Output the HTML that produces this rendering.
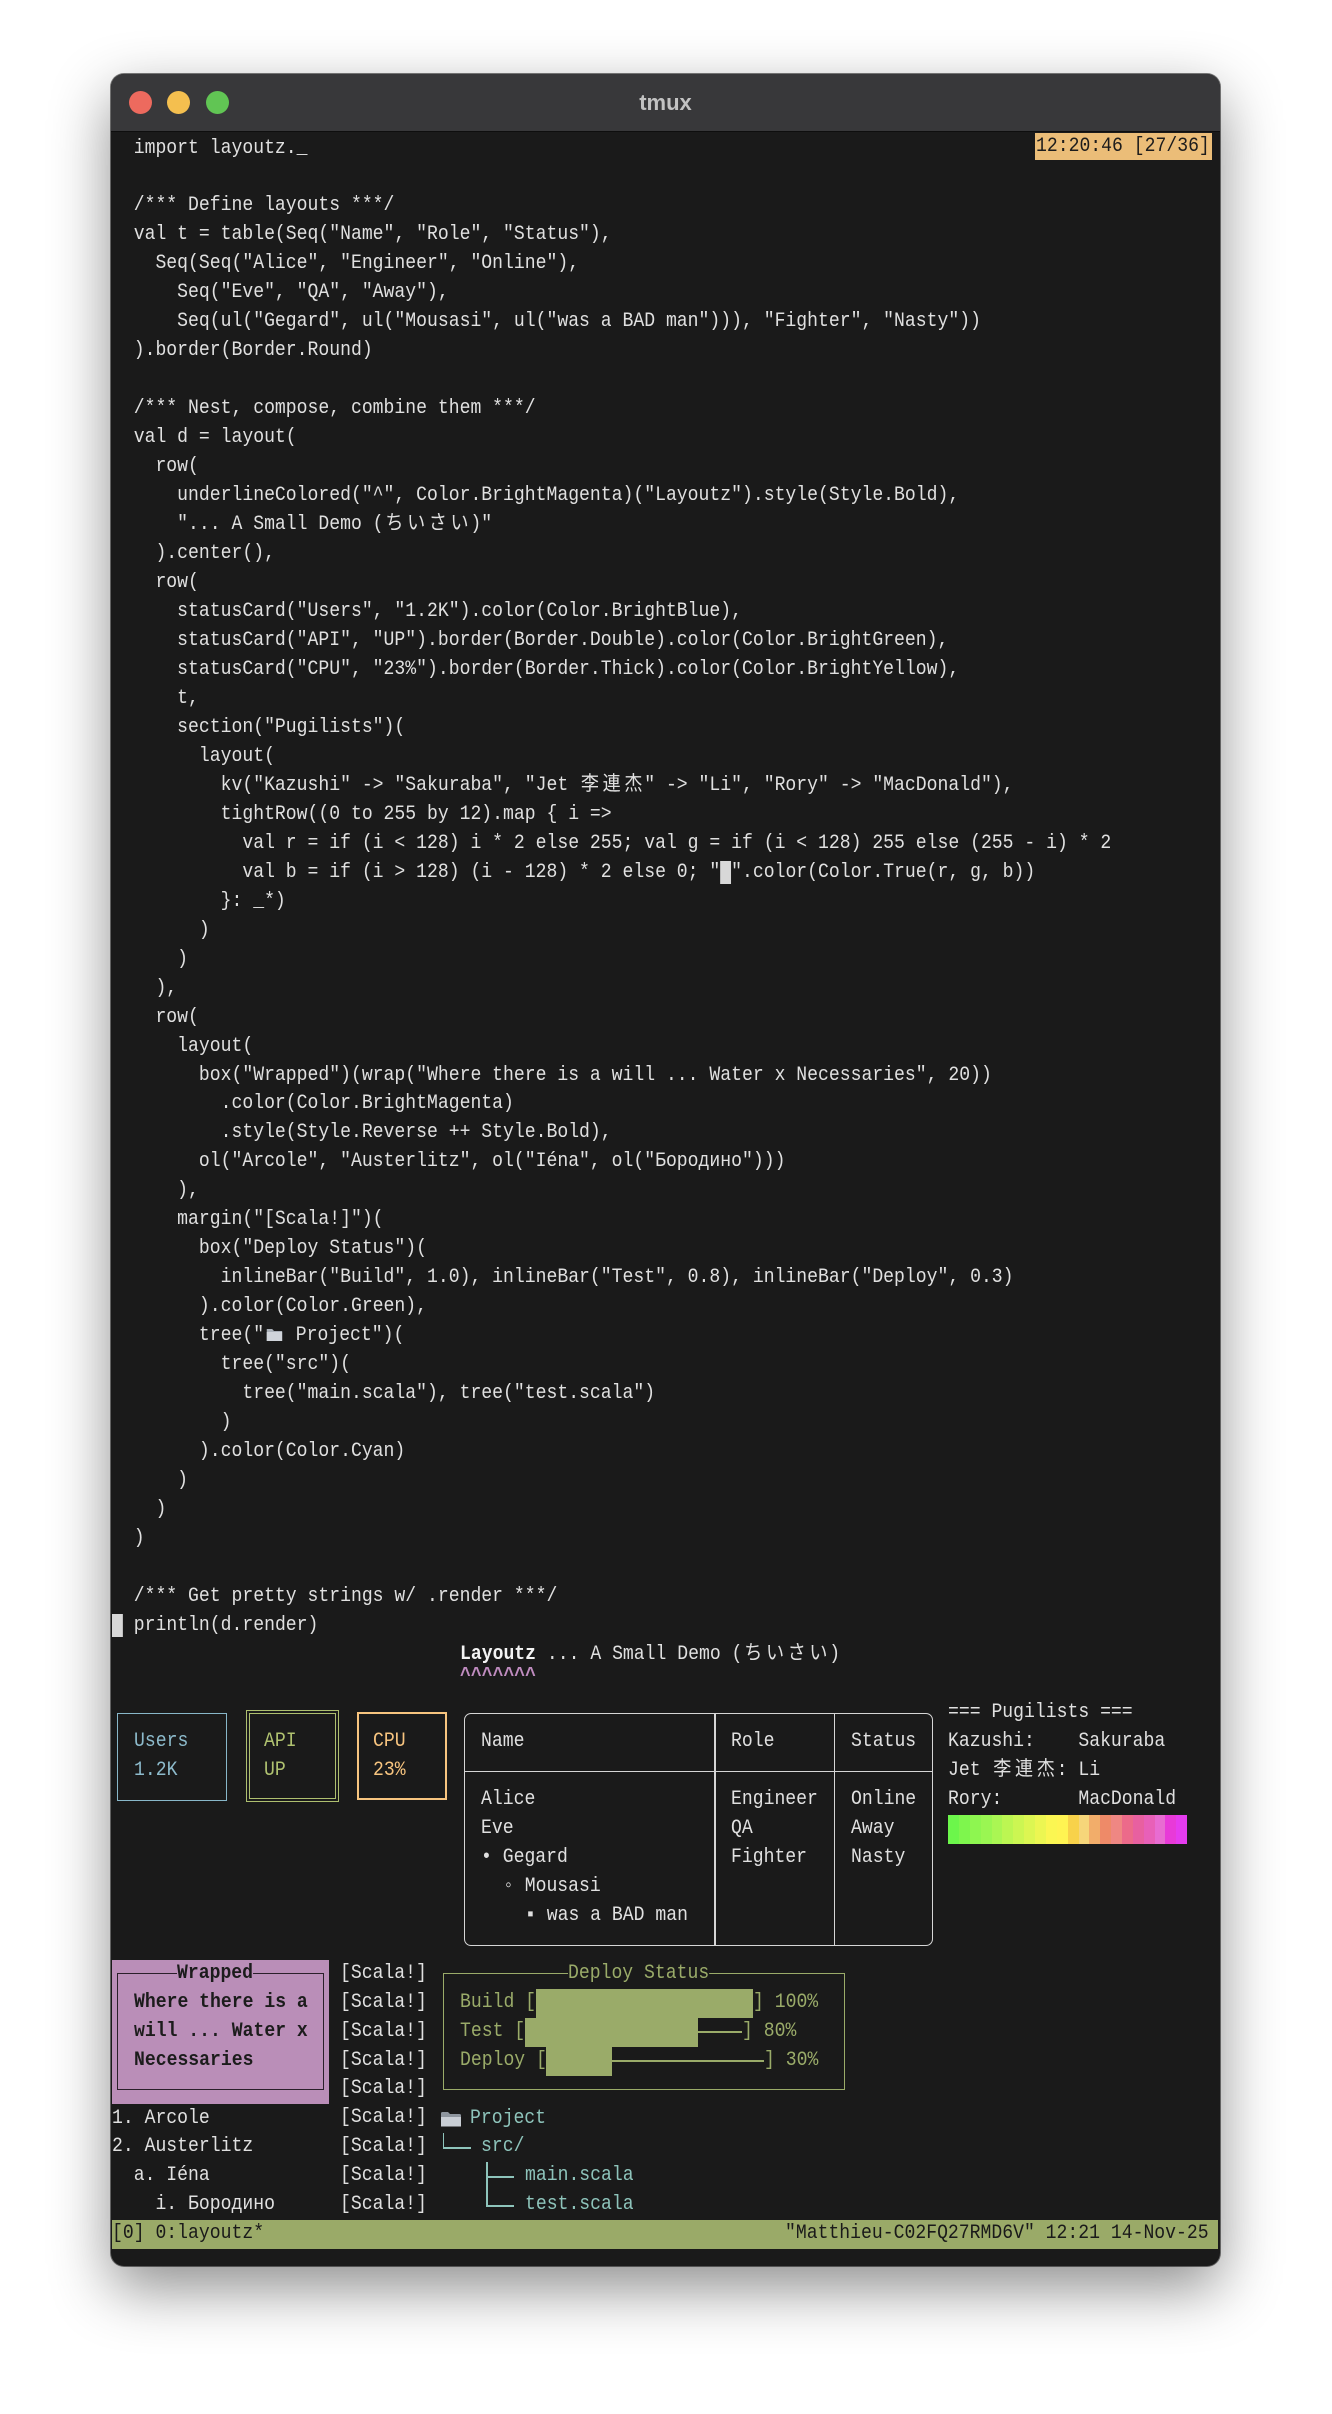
<!DOCTYPE html>
<html><head><meta charset="utf-8">
<style>
html,body{margin:0;padding:0}
body{width:1332px;height:2414px;background:#ffffff;position:relative;overflow:hidden;font-family:"Liberation Mono","Noto Sans CJK JP",monospace;}
.win{position:absolute;left:111px;top:74px;width:1109px;height:2192px;background:#1a1a1a;border-radius:13px;box-shadow:0 22px 60px rgba(0,0,0,.45),0 0 0 1px rgba(0,0,0,.5);overflow:hidden}
.tb{position:absolute;left:0;top:0;width:100%;height:57px;background:#38383a;border-bottom:1px solid #0e0e0e}
.dot{position:absolute;top:17px;width:23px;height:23px;border-radius:50%}
.title{position:absolute;left:0;width:100%;top:0;line-height:57px;text-align:center;color:#c2c2c2;font-family:"Liberation Sans",sans-serif;font-weight:bold;font-size:22px}
pre{margin:0;position:absolute;left:112px;top:134.5px;font-size:20px;line-height:28.97px;color:#e0e0e0;font-family:"Liberation Mono","Noto Sans CJK JP",monospace;transform:scaleX(.905);transform-origin:0 0}
.w{display:inline-block;width:24px;text-align:center}
.t{position:absolute;white-space:pre;font-size:20px;line-height:28.97px;height:29px;color:#e0e0e0;transform:scaleX(.905);transform-origin:0 0}
.box{position:absolute;box-sizing:border-box}
.blk{background:#d8d8d8}
</style></head><body>
<div class="win">
 <div class="tb">
  <div class="dot" style="left:18px;background:#ed6a5e"></div>
  <div class="dot" style="left:56px;background:#f4bf4f"></div>
  <div class="dot" style="left:95px;background:#61c554"></div>
  <div class="title">tmux</div>
 </div>
</div>

<div class="box" style="left:1035px;top:133px;height:27px;width:177px;background:#ebbd78"></div>
<div class="t" style="left:1036px;top:133px;height:27px;line-height:27px;color:#1c1c1c">12:20:46 [27/36]</div>

<pre>  import layoutz._

  /*** Define layouts ***/
  val t = table(Seq("Name", "Role", "Status"),
    Seq(Seq("Alice", "Engineer", "Online"),
      Seq("Eve", "QA", "Away"),
      Seq(ul("Gegard", ul("Mousasi", ul("was a BAD man"))), "Fighter", "Nasty"))
  ).border(Border.Round)

  /*** Nest, compose, combine them ***/
  val d = layout(
    row(
      underlineColored("^", Color.BrightMagenta)("Layoutz").style(Style.Bold),
      "... A Small Demo (<span class="w">ち</span><span class="w">い</span><span class="w">さ</span><span class="w">い</span>)"
    ).center(),
    row(
      statusCard("Users", "1.2K").color(Color.BrightBlue),
      statusCard("API", "UP").border(Border.Double).color(Color.BrightGreen),
      statusCard("CPU", "23%").border(Border.Thick).color(Color.BrightYellow),
      t,
      section("Pugilists")(
        layout(
          kv("Kazushi" -&gt; "Sakuraba", "Jet <span class="w">李</span><span class="w">連</span><span class="w">杰</span>" -&gt; "Li", "Rory" -&gt; "MacDonald"),
          tightRow((0 to 255 by 12).map { i =&gt;
            val r = if (i &lt; 128) i * 2 else 255; val g = if (i &lt; 128) 255 else (255 - i) * 2
            val b = if (i &gt; 128) (i - 128) * 2 else 0; "<span class="blk"> </span>".color(Color.True(r, g, b))
          }: _*)
        )
      )
    ),
    row(
      layout(
        box("Wrapped")(wrap("Where there is a will ... Water x Necessaries", 20))
          .color(Color.BrightMagenta)
          .style(Style.Reverse ++ Style.Bold),
        ol("Arcole", "Austerlitz", ol("Iéna", ol("Бородино")))
      ),
      margin("[Scala!]")(
        box("Deploy Status")(
          inlineBar("Build", 1.0), inlineBar("Test", 0.8), inlineBar("Deploy", 0.3)
        ).color(Color.Green),
        tree("<svg width="23" height="16" viewBox="0 0 21 16" style="vertical-align:-2px"><path d="M2 3h6l2 2h9v10H2z" fill="#aab0b8"/><path d="M2 6h17v9H2z" fill="#d0d4da"/></svg> Project")(
          tree("src")(
            tree("main.scala"), tree("test.scala")
          )
        ).color(Color.Cyan)
      )
    )
  )

  /*** Get pretty strings w/ .render ***/
<span class="blk"> </span> println(d.render)</pre>

<!-- header -->
<div class="t" style="left:459.5px;top:1640.9px"><b style="color:#f4f4f4">Layoutz</b> ... A Small Demo (<span class="w">ち</span><span class="w">い</span><span class="w">さ</span><span class="w">い</span>)</div>
<div class="t" style="left:459.5px;top:1663px;color:#c08cc0;font-weight:bold">^^^^^^^</div>

<!-- status cards -->
<div class="box" style="left:116.7px;top:1712.6px;width:110.5px;height:88.5px;border:1.5px solid #88b7c9"></div>
<div class="t" style="left:133.7px;top:1727.9px;color:#8dbbcc">Users</div>
<div class="t" style="left:133.7px;top:1756.8px;color:#8dbbcc">1.2K</div>

<div class="box" style="left:246px;top:1709.5px;width:93px;height:92.5px;border:4.5px double #aebf6f"></div>
<div class="t" style="left:264px;top:1727.9px;color:#b0c270">API</div>
<div class="t" style="left:264px;top:1756.8px;color:#b0c270">UP</div>

<div class="box" style="left:357px;top:1712px;width:90px;height:88px;border:2.5px solid #f7c47f"></div>
<div class="t" style="left:372.6px;top:1727.9px;color:#f7c47f">CPU</div>
<div class="t" style="left:372.6px;top:1756.8px;color:#f7c47f">23%</div>

<!-- table -->
<div class="box" style="left:464.3px;top:1712.6px;width:468.4px;height:233.3px;border:1.5px solid #d6d6d6;border-radius:7px"></div>
<div class="box" style="left:714px;top:1713px;width:1.5px;height:232px;background:#d6d6d6"></div>
<div class="box" style="left:833.5px;top:1713px;width:1.5px;height:232px;background:#d6d6d6"></div>
<div class="box" style="left:465px;top:1770.5px;width:467px;height:1.5px;background:#d6d6d6"></div>
<div class="t" style="left:481.2px;top:1727.9px">Name</div>
<div class="t" style="left:731px;top:1727.9px">Role</div>
<div class="t" style="left:850.5px;top:1727.9px">Status</div>
<div class="t" style="left:481.2px;top:1785.8px">Alice</div>
<div class="t" style="left:481.2px;top:1814.8px">Eve</div>
<div class="t" style="left:481.2px;top:1843.7px">• Gegard</div>
<div class="t" style="left:503px;top:1872.7px">◦ Mousasi</div>
<div class="t" style="left:524.7px;top:1901.7px">▪ was a BAD man</div>
<div class="t" style="left:731px;top:1785.8px">Engineer</div>
<div class="t" style="left:731px;top:1814.8px">QA</div>
<div class="t" style="left:731px;top:1843.7px">Fighter</div>
<div class="t" style="left:850.5px;top:1785.8px">Online</div>
<div class="t" style="left:850.5px;top:1814.8px">Away</div>
<div class="t" style="left:850.5px;top:1843.7px">Nasty</div>

<!-- pugilists -->
<div class="t" style="left:948.2px;top:1698.9px">=== Pugilists ===</div>
<div class="t" style="left:948.2px;top:1727.9px">Kazushi:    Sakuraba</div>
<div class="t" style="left:948.2px;top:1756.8px">Jet <span class="w">李</span><span class="w">連</span><span class="w">杰</span>: Li</div>
<div class="t" style="left:948.2px;top:1785.8px">Rory:       MacDonald</div>
<div style="position:absolute;left:948.2px;top:1814.8px;height:29px;width:238.9px;display:flex">
<div style="flex:1;background:#6cf64b"></div><div style="flex:1;background:#7ef64d"></div><div style="flex:1;background:#8ef650"></div><div style="flex:1;background:#9af652"></div><div style="flex:1;background:#aaf653"></div><div style="flex:1;background:#bcf652"></div><div style="flex:1;background:#ccf652"></div><div style="flex:1;background:#dcf652"></div><div style="flex:1;background:#ecf652"></div><div style="flex:1;background:#fbf652"></div><div style="flex:1;background:#fff452"></div><div style="flex:1;background:#f8d24a"></div><div style="flex:1;background:#f6d67a"></div><div style="flex:1;background:#f2ad6a"></div><div style="flex:1;background:#ee8a68"></div><div style="flex:1;background:#ef8783"></div><div style="flex:1;background:#ec6a8a"></div><div style="flex:1;background:#e860a0"></div><div style="flex:1;background:#e860b8"></div><div style="flex:1;background:#e86cd2"></div><div style="flex:1;background:#e83ad8"></div><div style="flex:1;background:#e53cef"></div>
</div>

<!-- wrapped -->
<div class="box" style="left:112px;top:1959.6px;width:217.2px;height:144.9px;background:#ba8eb8"></div>
<div class="box" style="left:116.7px;top:1973.4px;height:117px;border:1.5px solid #2a1f2a;width:207px"></div>
<div class="t" style="left:177.2px;top:1961px;color:#1c1c1c;font-weight:bold;background:#ba8eb8;height:26px;line-height:26px">Wrapped</div>
<div class="t" style="left:133.7px;top:1988.6px;color:#1c1c1c;font-weight:bold">Where there is a</div>
<div class="t" style="left:133.7px;top:2017.6px;color:#1c1c1c;font-weight:bold">will ... Water x</div>
<div class="t" style="left:133.7px;top:2046.5px;color:#1c1c1c;font-weight:bold">Necessaries</div>

<!-- ol -->
<div class="t" style="left:112px;top:2104.5px">1. Arcole</div>
<div class="t" style="left:112px;top:2133.4px">2. Austerlitz</div>
<div class="t" style="left:112px;top:2162.4px">  a. Iéna</div>
<div class="t" style="left:112px;top:2191.4px">    i. Бородино</div>

<!-- scala margin -->
<div class="t" style="left:340.1px;top:1959.6px">[Scala!]
[Scala!]
[Scala!]
[Scala!]
[Scala!]
[Scala!]
[Scala!]
[Scala!]
[Scala!]</div>

<!-- deploy -->
<div class="box" style="left:443px;top:1973.4px;width:402px;height:117px;border:1.5px solid #9aab69"></div>
<div class="t" style="left:568.1px;top:1961px;height:26px;line-height:26px;color:#9aab69;background:#1a1a1a">Deploy Status</div>
<div class="box" style="left:535.5px;top:1988.6px;width:217.2px;height:29px;background:#9aab69"></div>
<div class="box" style="left:524.7px;top:2017.6px;width:173.7px;height:29px;background:#9aab69"></div>
<div class="box" style="left:698.4px;top:2031.4px;width:43.5px;height:1.5px;background:#9aab69"></div>
<div class="box" style="left:546.4px;top:2046.5px;width:65.2px;height:29px;background:#9aab69"></div>
<div class="box" style="left:611.6px;top:2060.3px;width:152px;height:1.5px;background:#9aab69"></div>
<div class="t" style="left:459.5px;top:1988.6px;color:#9aab69">Build [</div>
<div class="t" style="left:752.7px;top:1988.6px;color:#9aab69">] 100%</div>
<div class="t" style="left:459.5px;top:2017.6px;color:#9aab69">Test [</div>
<div class="t" style="left:741.9px;top:2017.6px;color:#9aab69">] 80%</div>
<div class="t" style="left:459.5px;top:2046.5px;color:#9aab69">Deploy [</div>
<div class="t" style="left:763.6px;top:2046.5px;color:#9aab69">] 30%</div>

<!-- tree -->
<svg style="position:absolute;left:440px;top:2110px" width="22" height="18" viewBox="0 0 22 18"><path d="M1 3.5Q1 2 2.5 2H8l2 2h9.5Q21 4 21 5.5V16H1z" fill="#8e959e"/><path d="M1 7h20v9.5H1z" fill="#c9ced5"/></svg>
<div class="t" style="left:470.4px;top:2104.5px;color:#8ec4bb">Project</div>
<div class="box" style="left:442.5px;top:2133.4px;width:1.5px;height:15.2px;background:#8ec4bb"></div>
<div class="box" style="left:442.5px;top:2147.2px;width:28px;height:1.5px;background:#8ec4bb"></div>
<div class="t" style="left:481.2px;top:2133.4px;color:#8ec4bb">src/</div>
<div class="box" style="left:486px;top:2162.4px;width:1.5px;height:44px;background:#8ec4bb"></div>
<div class="box" style="left:486px;top:2176.2px;width:28px;height:1.5px;background:#8ec4bb"></div>
<div class="box" style="left:486px;top:2205.2px;width:28px;height:1.5px;background:#8ec4bb"></div>
<div class="t" style="left:524.7px;top:2162.4px;color:#8ec4bb">main.scala</div>
<div class="t" style="left:524.7px;top:2191.4px;color:#8ec4bb">test.scala</div>

<!-- status bar -->
<div class="box" style="left:112px;top:2220.3px;width:1106px;height:29px;background:#9aaa68"></div>
<div class="t" style="left:112px;top:2220.3px;color:#1a1a1a">[0] 0:layoutz*</div>
<div class="t" style="left:785.3px;top:2220.3px;color:#1a1a1a">"Matthieu-C02FQ27RMD6V" 12:21 14-Nov-25</div>
</body></html>
